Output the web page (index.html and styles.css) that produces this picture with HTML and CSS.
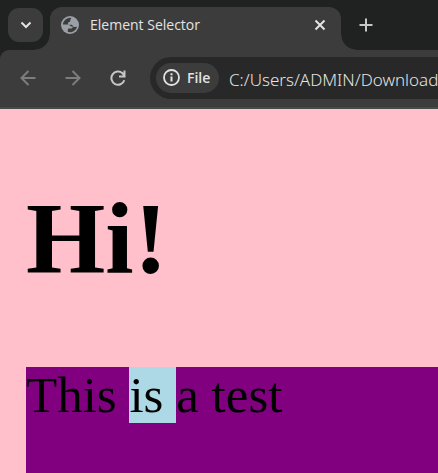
FILE: index.html
```html
<!DOCTYPE html>
<html lang="en">
<head>
<meta charset="utf-8">
<title>Element Selector</title>
<link rel="stylesheet" href="styles.css">
</head>
<body>
<header class="browser">
  <div class="tabs">
    <button class="tab-search" aria-label="Search tabs">
      <svg width="12" height="8" viewBox="0 0 12 8"><path d="M1.500 1.500 6 6l4.500-4.500" fill="none" stroke="currentColor" stroke-width="2"/></svg>
    </button>
    <div class="tab">
      <svg class="globe" width="18" height="18" viewBox="0 0 18 18"><circle cx="9" cy="9" r="9" fill="#9aa0a6"/><path d="M10.300 1.900C7.500 1.500 4.500 3 3 5.300 2.300 6.300 2 7.500 1.900 8.600h5.300c1.600 0 1.800 1.900 3 1.900h1.600c-.1 1.500-.8 2-2 2H7.600c-.8 0-.8 1-.8 3.300 1.200.4 2.600.5 4 .2 2.600-.6 4.800-2.900 5.300-5.600-.8.5-1.600.6-2.600.6-1.800 0-1.500-2.300-3.200-2.300H8.100c-1.500 0-1.600-2.500.1-2.700 1.500-.1.900-1.400 1.100-2.100.1-.8.500-1.400 1-2Z" fill="#3c3c3c"/></svg>
      <span class="tab-title">Element Selector</span>
      <button class="icon-button" aria-label="Close tab">
        <svg width="12" height="12" viewBox="0 0 12 12"><path d="m1.500 1.500 9 9m0-9-9 9" fill="none" stroke="currentColor" stroke-width="2"/></svg>
      </button>
    </div>
    <button class="icon-button new-tab" aria-label="New tab">
      <svg width="14" height="14" viewBox="0 0 14 14"><path d="M7 .5v13M.5 7h13" fill="none" stroke="currentColor" stroke-width="2"/></svg>
    </button>
  </div>
  <nav class="toolbar" aria-label="Navigation">
    <button class="icon-button muted" aria-label="Back">
      <svg width="16" height="16" viewBox="0 0 16 16"><path d="M15.500 8H2M8.500 1 1.500 8l7 7" fill="none" stroke="currentColor" stroke-width="2"/></svg>
    </button>
    <button class="icon-button muted" aria-label="Forward">
      <svg width="16" height="16" viewBox="0 0 16 16"><path d="M.5 8H14M7.500 1l7 7-7 7" fill="none" stroke="currentColor" stroke-width="2"/></svg>
    </button>
    <button class="icon-button reload" aria-label="Reload">
      <svg width="16" height="16" viewBox="0 0 16 16"><path d="M14.300 10.200A6.600 6.600 0 1 1 12.500 3.300L14.500 5.500M14.500.5v6H9" fill="none" stroke="currentColor" stroke-width="2"/></svg>
    </button>
    <div class="address">
      <button class="scheme">
        <svg width="17" height="17" viewBox="0 0 17 17"><circle cx="8.500" cy="8.500" r="7.500" fill="none" stroke="currentColor" stroke-width="1.800"/><path d="M8.500 7.500v5M8.500 4.300v2" stroke="currentColor" stroke-width="2"/></svg>
        File
      </button>
      <input class="url" aria-label="Address" value="C:/Users/ADMIN/Downloads">
    </div>
  </nav>
</header>
<main class="page">
  <h1>Hi!</h1>
  <p class="sample">This <span class="highlight">is </span>a test</p>
</main>
</body>
</html>
```
FILE: styles.css
```css
* { box-sizing: border-box; }

body {
  margin: 0;
  min-height: 100vh;
  display: flex;
  flex-direction: column;
  overflow: hidden;
  background: pink;
  color: #000;
  font-family: "Liberation Serif", "Times New Roman", serif;
}

button, input {
  margin: 0;
  padding: 0;
  border: 0;
  background: none;
  color: inherit;
  font: inherit;
}

svg { display: block; flex: none; }

.browser {
  background: #1f2221;
  color: #e3e3e3;
  font-family: "Open Sans", "Noto Sans", sans-serif;
}

.tabs {
  display: flex;
  align-items: flex-end;
  height: 50px;
  padding-left: 8px;
}

.tab-search {
  display: grid;
  place-items: center;
  width: 35px;
  height: 34px;
  margin: 0 7px 8px 0;
  border-radius: 11px;
  background: #3c3c3c;
}

.tab {
  position: relative;
  display: flex;
  align-items: center;
  width: 291px;
  height: 43px;
  padding: 0 11px 8px;
  border-radius: 12px 12px 0 0;
  background: #3c3c3c;
}

.tab::before, .tab::after {
  content: "";
  position: absolute;
  bottom: 0;
  width: 15px;
  height: 15px;
}

.tab::before {
  right: 100%;
  background: radial-gradient(circle at 0 0, transparent 14px, #3c3c3c 15px);
}

.tab::after {
  left: 100%;
  background: radial-gradient(circle at 100% 0, transparent 14px, #3c3c3c 15px);
}

.tab-title {
  flex: 1;
  margin-left: 11px;
  font-size: 14px;
  font-weight: 400;
  white-space: nowrap;
}

.icon-button {
  display: grid;
  place-items: center;
  width: 20px;
  height: 20px;
}

.new-tab { margin: 0 0 15px 15px; color: #c7c7c7; }

.toolbar {
  display: flex;
  align-items: center;
  gap: 25px;
  height: 59px;
  padding: 0 0 2px 18px;
  border-bottom: 2px solid #484b4d;
  border-top-left-radius: 9px;
  background: #3c3c3c;
}

.muted { color: #7d7d7d; }

.reload { color: #c7c7c7; }

.address {
  flex: 1;
  display: flex;
  align-items: center;
  min-width: 0;
  height: 42px;
  margin-left: -3px;
  padding-left: 6px;
  border-radius: 21px 0 0 21px;
  background: #282828;
}

.scheme {
  display: flex;
  flex: none;
  align-items: center;
  gap: 7px;
  width: 63px;
  height: 30px;
  padding-left: 7px;
  border-radius: 15px;
  background: #3c3c3c;
  font-size: 14px;
  font-weight: 600;
}

.url {
  flex: 1;
  min-width: 0;
  margin-left: 10px;
  padding-top: 3px;
  font-family: "Noto Sans", sans-serif;
  font-size: 17px;
  font-weight: 350;
}

.page {
  flex: 1;
  display: flex;
  flex-direction: column;
  padding-left: 26px;
}

h1 {
  margin: 70px 0 68px;
  font-size: 102px;
  line-height: 120px;
}

.sample {
  flex: 1;
  margin: 0;
  background: purple;
  font-size: 51px;
  line-height: 57px;
}

.highlight { background: lightblue; }
```
